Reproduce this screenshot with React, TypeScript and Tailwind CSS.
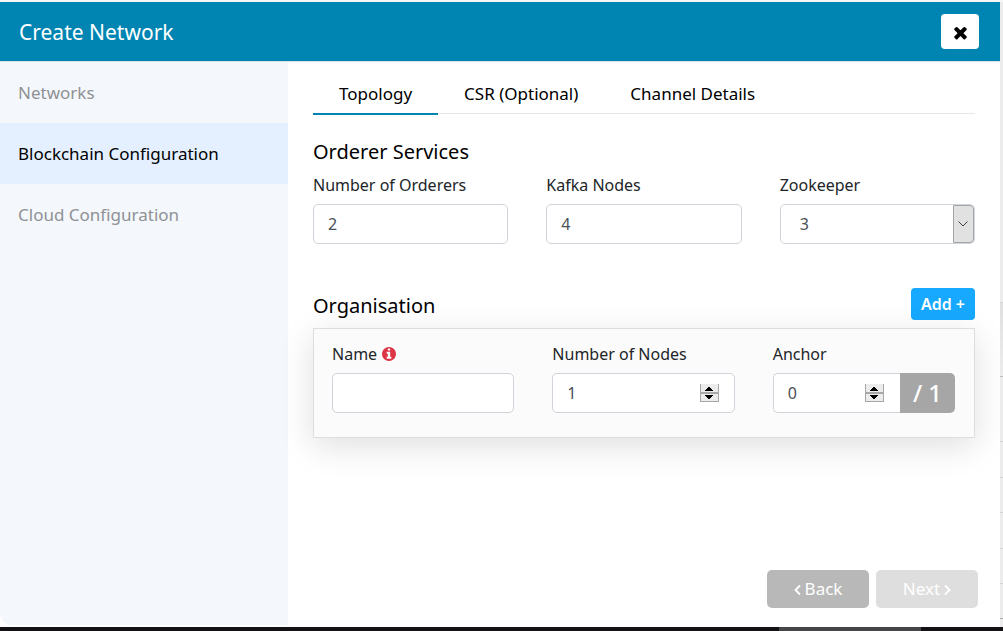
import { useState } from "react";
import type { ReactNode } from "react";

const fieldClass =
  "h-10 w-full min-w-0 appearance-none rounded-[5px] border border-[#ced4da] bg-white px-[14px] text-base text-[#495057] outline-none [appearance:textfield] [&::-webkit-inner-spin-button]:appearance-none";

function CrossIcon() {
  return (
    <svg viewBox="0 0 1792 1792" className="size-[19px]" fill="currentColor" aria-hidden="true">
      <path d="M1490 1322q0 40-28 68l-136 136q-28 28-68 28t-68-28l-294-294-294 294q-28 28-68 28t-68-28l-136-136q-28-28-28-68t28-68l294-294-294-294q-28-28-28-68t28-68l136-136q28-28 68-28t68 28l294 294 294-294q28-28 68-28t68 28l136 136q28 28 28 68t-28 68l-294 294 294 294q28 28 28 68z" />
    </svg>
  );
}

function InfoIcon() {
  return (
    <svg
      viewBox="128 128 1536 1536"
      className="ml-[5px] size-[14px] text-[#dc3545]"
      fill="currentColor"
      aria-hidden="true"
    >
      <path d="M1152 1376v-160q0-14-9-23t-23-9h-96v-512q0-14-9-23t-23-9h-320q-14 0-23 9t-9 23v160q0 14 9 23t23 9h96v320h-96q-14 0-23 9t-9 23v160q0 14 9 23t23 9h448q14 0 23-9t9-23zm-128-896v-160q0-14-9-23t-23-9h-192q-14 0-23 9t-9 23v160q0 14 9 23t23 9h192q14 0 23-9t9-23zm640 416q0 209-103 385.5t-279.5 279.5-385.5 103-385.5-103-279.5-279.5-103-385.5 103-385.5 279.5-279.5 385.5-103 385.5 103 279.5 279.5 103 385.5z" />
    </svg>
  );
}

function Chevron({ d }: { d: string }) {
  return (
    <svg
      viewBox="0 0 7 12"
      className="mt-[2px] h-3 w-[7px]"
      fill="none"
      stroke="currentColor"
      strokeWidth="1.8"
      aria-hidden="true"
    >
      <path d={d} />
    </svg>
  );
}

function Field({ id, label, children }: { id: string; label: ReactNode; children: ReactNode }) {
  return (
    <div className="min-w-0">
      <label htmlFor={id} className="mb-[7px] flex h-6 items-center text-base text-[#212529]">
        {label}
      </label>
      {children}
    </div>
  );
}

function Stepper({ what, onStep }: { what: string; onStep: (by: number) => void }) {
  return (
    <div className="absolute inset-y-0 right-4 flex flex-col justify-center">
      <button
        type="button"
        aria-label={`Increase ${what}`}
        onClick={() => onStep(1)}
        className="flex h-[9px] w-[19px] items-end justify-center border-x border-b border-[#a8a8a8] bg-[#ececec]"
      >
        <svg viewBox="0 0 8 4" className="mb-px h-1 w-2" shapeRendering="crispEdges">
          <path d="M3 0h2v1h1v1h1v1h1v1H0V3h1V2h1V1h1z" />
        </svg>
      </button>
      <button
        type="button"
        aria-label={`Decrease ${what}`}
        onClick={() => onStep(-1)}
        className="flex h-[9px] w-[19px] items-start justify-center border border-[#a8a8a8] bg-[#ececec]"
      >
        <svg viewBox="0 0 8 4" className="mt-px h-1 w-2" shapeRendering="crispEdges">
          <path d="M0 0h8v1H7v1H6v1H5v1H3V3H2V2H1V1H0z" />
        </svg>
      </button>
    </div>
  );
}

const steps = ["Networks", "Blockchain Configuration", "Cloud Configuration"];
const tabs = ["Topology", "CSR (Optional)", "Channel Details"];

export default function App() {
  const [tab, setTab] = useState(0);
  const [nodes, setNodes] = useState(1);
  const [anchor, setAnchor] = useState(0);

  return (
    <div className="flex min-h-screen flex-col bg-[#f6f6f6] pt-[2px] font-['Noto_Sans',sans-serif] text-black">
      <div className="flex grow">
        <div className="flex min-w-0 grow flex-col bg-white">
          <header className="flex h-[60px] items-center justify-between border-b border-[#dee2e6] bg-[#0085b3] pr-[21px] pl-[19px]">
            <h1 className="pt-[2px] text-[21px] text-white">Create Network</h1>
            <button
              type="button"
              aria-label="Close"
              className="flex h-[35px] w-[38px] items-center justify-center rounded-[4px] bg-white pt-px"
            >
              <CrossIcon />
            </button>
          </header>

          <div className="flex grow">
            <nav className="mb-[2px] w-72 shrink-0 rounded-bl-xl bg-[#f4f8fd]">
              {steps.map((step, i) => (
                <a
                  key={step}
                  href="#"
                  className={
                    i === 1
                      ? "flex h-[61px] items-center bg-[#e4f0ff] px-[18px] pt-px text-[17px] text-black"
                      : "flex h-[61px] items-center px-[18px] pt-px text-[17px] text-[#8f9194]"
                  }
                >
                  {step}
                </a>
              ))}
            </nav>

            <main className="flex min-w-0 grow flex-col px-[25px] pt-3 pb-[19px]">
              <div role="tablist" className="flex h-10 border-b border-[#e6e8ea]">
                {tabs.map((name, i) => (
                  <button
                    key={name}
                    type="button"
                    role="tab"
                    aria-selected={tab === i}
                    onClick={() => setTab(i)}
                    className={
                      tab === i
                        ? "h-[41px] border-b-2 border-[#0085b3] px-[26px] pt-px text-[17px]"
                        : "h-[41px] border-b-2 border-transparent px-[26px] pt-px text-[17px]"
                    }
                  >
                    {name}
                  </button>
                ))}
              </div>

              <h2 className="mt-6 text-xl leading-7">Orderer Services</h2>
              <div className="mt-[7px] grid grid-cols-3 gap-[38px]">
                <Field id="orderers" label="Number of Orderers">
                  <input id="orderers" type="number" defaultValue={2} className={fieldClass} />
                </Field>
                <Field id="kafka" label="Kafka Nodes">
                  <input id="kafka" type="number" defaultValue={4} className={fieldClass} />
                </Field>
                <Field id="zookeeper" label="Zookeeper">
                  <div className="relative">
                    <select
                      id="zookeeper"
                      defaultValue="3"
                      className="h-10 w-full appearance-none rounded-[5px] border border-[#ced4da] bg-white px-[19px] text-base text-[#495057]"
                    >
                      <option>3</option>
                      <option>5</option>
                      <option>7</option>
                    </select>
                    <span className="pointer-events-none absolute inset-y-px right-px flex w-[21px] items-center justify-center rounded-r-[4px] border border-[#a3a5a8] bg-[#e1e1e1]">
                      <svg viewBox="0 0 10 6" className="h-[6px] w-[10px]" fill="none" stroke="#404040">
                        <path d="M.5.5 5 5 9.5.5" />
                      </svg>
                    </span>
                  </div>
                </Field>
              </div>

              <div className="mt-11 flex items-center justify-between">
                <h2 className="mt-1 text-xl">Organisation</h2>
                <button
                  type="button"
                  className="h-8 rounded-[4px] bg-[#17a9ff] px-[10px] text-base font-semibold text-white"
                >
                  Add +
                </button>
              </div>
              <section className="mt-2 grid grid-cols-3 gap-[38px] border border-[#dcdddf] bg-[#fbfbfb] pt-[13px] pr-[19px] pb-6 pl-[18px] shadow-[0_8px_32px_rgba(0,0,0,0.13)]">
                <Field
                  id="name"
                  label={
                    <>
                      Name
                      <InfoIcon />
                    </>
                  }
                >
                  <input id="name" type="text" className={fieldClass} />
                </Field>
                <Field id="nodes" label="Number of Nodes">
                  <div className="relative">
                    <input
                      id="nodes"
                      type="number"
                      value={nodes}
                      onChange={(e) => setNodes(Number(e.target.value))}
                      className={fieldClass}
                    />
                    <Stepper
                      what="number of nodes"
                      onStep={(by) => setNodes(Math.max(1, nodes + by))}
                    />
                  </div>
                </Field>
                <Field id="anchor" label="Anchor">
                  <div className="flex">
                    <div className="relative min-w-0 grow">
                      <input
                        id="anchor"
                        type="number"
                        value={anchor}
                        onChange={(e) => setAnchor(Number(e.target.value))}
                        className={`${fieldClass} rounded-r-none border-r-0`}
                      />
                      <Stepper
                        what="anchor"
                        onStep={(by) => setAnchor(Math.min(nodes, Math.max(0, anchor + by)))}
                      />
                    </div>
                    <span className="flex w-[55px] shrink-0 items-center justify-center rounded-r-[5px] bg-[#a6a6a6] text-2xl font-medium text-white">
                      / {nodes}
                    </span>
                  </div>
                </Field>
              </section>

              <div className="mt-auto -mr-[3px] flex justify-end gap-[7px]">
                <button
                  type="button"
                  className="flex h-[38px] w-[102px] items-center justify-center gap-1 rounded-[5px] bg-[#b8b8b8] text-[17px] text-white"
                >
                  <Chevron d="M6 1.5 1.5 6 6 10.5" />
                  Back
                </button>
                <button
                  type="button"
                  disabled
                  className="flex h-[38px] w-[102px] items-center justify-center gap-1 rounded-[5px] bg-[#dedede] text-[17px] text-white"
                >
                  Next
                  <Chevron d="M1 1.5 5.5 6 1 10.5" />
                </button>
              </div>
            </main>
          </div>
        </div>

        <div className="flex w-[3px] shrink-0 flex-col bg-[#ececec]">
          <div className="h-[300px]" />
          <div className="h-[74px] border-t border-[#d4d4d4] bg-linear-to-b from-[#e0e0e0] to-[#ececec]" />
          <div className="h-[65px] border-t border-[#bdbdbd]" />
          <div className="h-9 border-t border-[#d4d4d4]" />
          <div className="h-[35px] border-t border-[#d4d4d4]" />
          <div className="h-9 border-t border-[#d4d4d4]" />
          <div className="h-[35px] border-t border-[#d4d4d4]" />
          <div className="grow border-t border-[#d4d4d4]" />
          <div className="h-[9px] border-t border-[#aaaaaa]" />
        </div>
      </div>
      <div className="flex h-1 bg-[#131113]">
        <div className="mr-[82px] ml-auto w-[142px] bg-[#464547]" />
      </div>
    </div>
  );
}
